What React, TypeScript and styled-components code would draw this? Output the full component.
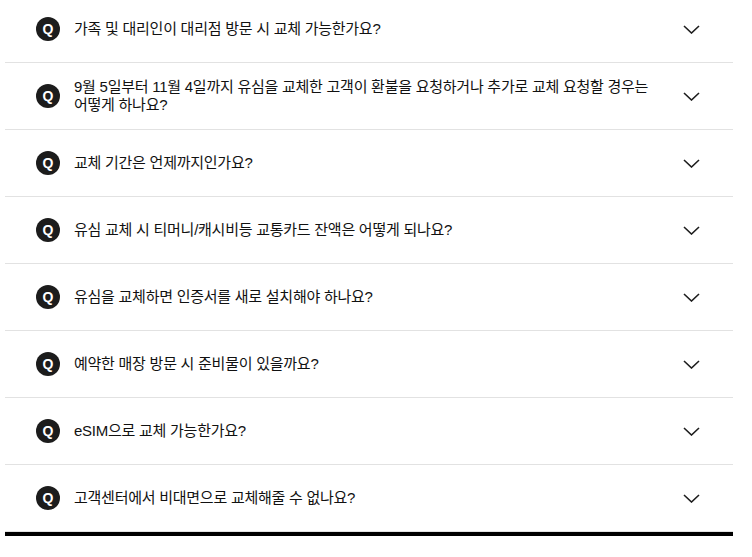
import React from 'react'
import styled, { createGlobalStyle } from 'styled-components'

const GlobalStyle = createGlobalStyle`
  html, body {
    margin: 0;
    padding: 0;
    background: #fff;
  }
  body {
    font-family: 'Liberation Sans', 'Noto Sans CJK KR', sans-serif;
    color: #111;
  }
`

const faqs = [
  '가족 및 대리인이 대리점 방문 시 교체 가능한가요?',
  '9월 5일부터 11월 4일까지 유심을 교체한 고객이 환불을 요청하거나 추가로 교체 요청할 경우는 어떻게 하나요?',
  '교체 기간은 언제까지인가요?',
  '유심 교체 시 티머니/캐시비등 교통카드 잔액은 어떻게 되나요?',
  '유심을 교체하면 인증서를 새로 설치해야 하나요?',
  '예약한 매장 방문 시 준비물이 있을까요?',
  'eSIM으로 교체 가능한가요?',
  '고객센터에서 비대면으로 교체해줄 수 없나요?',
]

const FaqList = styled.ul`
  list-style: none;
  margin: -4px 0 0 5px;
  padding: 0;
  width: 728px;
  border-bottom: 4px solid #000;
`

const FaqRow = styled.li`
  display: flex;
  align-items: center;
  gap: 14px;
  height: 67px;
  box-sizing: border-box;
  padding: 0 33px 0 31px;
  border-bottom: 1px solid #e2e2e2;
  cursor: pointer;
`

const QBadge = styled.span`
  flex: none;
  width: 24px;
  height: 24px;
  border-radius: 50%;
  background: #1c1c1c;
  color: #fff;
  font-family: 'Liberation Sans', sans-serif;
  font-weight: 700;
  font-size: 14px;
  display: flex;
  align-items: center;
  justify-content: center;
`

const Question = styled.p`
  flex: 1;
  margin: 0 9px 0 0;
  font-size: 15px;
  line-height: 18px;
  letter-spacing: -0.25px;
`

const Chevron = () => (
  <svg width="17" height="9" viewBox="0 0 17 9" fill="none" style={{ flex: 'none' }}>
    <polyline points="1,1 8.5,8 16,1" stroke="#1d1d1d" strokeWidth="1.6" />
  </svg>
)

export default function App() {
  return (
    <>
      <GlobalStyle />
      <FaqList>
        {faqs.map((q) => (
          <FaqRow key={q}>
            <QBadge>Q</QBadge>
            <Question>{q}</Question>
            <Chevron />
          </FaqRow>
        ))}
      </FaqList>
    </>
  )
}
